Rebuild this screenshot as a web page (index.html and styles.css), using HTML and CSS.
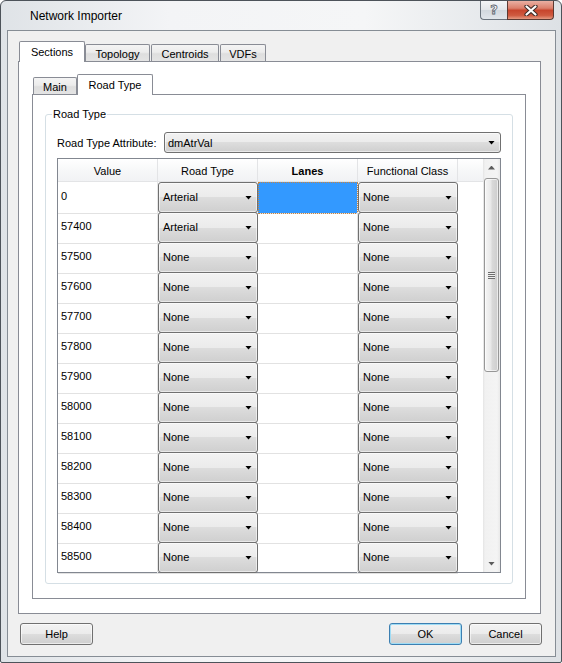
FILE: index.html
```html
<!DOCTYPE html>
<html>
<head>
<meta charset="utf-8">
<title>Network Importer</title>
<link rel="stylesheet" href="styles.css">
</head>
<body>
<div class="window">
  <div class="titlebar">
    <div class="title">Network Importer</div>
    <div class="caption-btns">
      <div class="cap-help"><span>?</span></div>
      <div class="cap-close">
        <svg width="14" height="11" viewBox="0 0 14 11">
          <path d="M2.5 1.5 L11.5 9.5 M11.5 1.5 L2.5 9.5" stroke="#3b2a26" stroke-width="4.2" stroke-linecap="round" fill="none"/>
          <path d="M2.5 1.5 L11.5 9.5 M11.5 1.5 L2.5 9.5" stroke="#ffffff" stroke-width="2.2" stroke-linecap="round" fill="none"/>
        </svg>
      </div>
    </div>
  </div>
  <div class="client">
    <div class="tabctl outer">
      <div class="tabstrip">
        <div class="tab sel w-sections">Sections</div>
        <div class="tab w-topology">Topology</div>
        <div class="tab w-centroids">Centroids</div>
        <div class="tab w-vdfs">VDFs</div>
      </div>
      <div class="tabpanel outer-panel">
        <div class="tabctl inner">
          <div class="tabstrip">
            <div class="tab w-main">Main</div>
            <div class="tab sel w-road">Road Type</div>
          </div>
          <div class="tabpanel inner-panel">
            <div class="groupbox">
              <span class="legend">Road Type</span>
              <div class="attr-row">
                <span class="attr-label">Road Type Attribute:</span>
                <div class="combo attr-combo"><span class="combo-text">dmAtrVal</span><i class="arrow"></i></div>
              </div>
              <div class="grid">
                <div class="table">
                  <div class="hdr">
                    <div class="hcell">Value</div>
                    <div class="hcell">Road Type</div>
                    <div class="hcell bold">Lanes</div>
                    <div class="hcell">Functional Class</div>
                    <div class="hcell filler"></div>
                  </div>
                  <div class="row">
                    <div class="cell val">0</div>
                    <div class="cell cb"><div class="combo"><span class="combo-text">Arterial</span><i class="arrow"></i></div></div>
                    <div class="cell lanes selected"></div>
                    <div class="cell cb"><div class="combo"><span class="combo-text">None</span><i class="arrow"></i></div></div>
                  </div>
                  <div class="row">
                    <div class="cell val">57400</div>
                    <div class="cell cb"><div class="combo"><span class="combo-text">Arterial</span><i class="arrow"></i></div></div>
                    <div class="cell lanes"></div>
                    <div class="cell cb"><div class="combo"><span class="combo-text">None</span><i class="arrow"></i></div></div>
                  </div>
                  <div class="row">
                    <div class="cell val">57500</div>
                    <div class="cell cb"><div class="combo"><span class="combo-text">None</span><i class="arrow"></i></div></div>
                    <div class="cell lanes"></div>
                    <div class="cell cb"><div class="combo"><span class="combo-text">None</span><i class="arrow"></i></div></div>
                  </div>
                  <div class="row">
                    <div class="cell val">57600</div>
                    <div class="cell cb"><div class="combo"><span class="combo-text">None</span><i class="arrow"></i></div></div>
                    <div class="cell lanes"></div>
                    <div class="cell cb"><div class="combo"><span class="combo-text">None</span><i class="arrow"></i></div></div>
                  </div>
                  <div class="row">
                    <div class="cell val">57700</div>
                    <div class="cell cb"><div class="combo"><span class="combo-text">None</span><i class="arrow"></i></div></div>
                    <div class="cell lanes"></div>
                    <div class="cell cb"><div class="combo"><span class="combo-text">None</span><i class="arrow"></i></div></div>
                  </div>
                  <div class="row">
                    <div class="cell val">57800</div>
                    <div class="cell cb"><div class="combo"><span class="combo-text">None</span><i class="arrow"></i></div></div>
                    <div class="cell lanes"></div>
                    <div class="cell cb"><div class="combo"><span class="combo-text">None</span><i class="arrow"></i></div></div>
                  </div>
                  <div class="row">
                    <div class="cell val">57900</div>
                    <div class="cell cb"><div class="combo"><span class="combo-text">None</span><i class="arrow"></i></div></div>
                    <div class="cell lanes"></div>
                    <div class="cell cb"><div class="combo"><span class="combo-text">None</span><i class="arrow"></i></div></div>
                  </div>
                  <div class="row">
                    <div class="cell val">58000</div>
                    <div class="cell cb"><div class="combo"><span class="combo-text">None</span><i class="arrow"></i></div></div>
                    <div class="cell lanes"></div>
                    <div class="cell cb"><div class="combo"><span class="combo-text">None</span><i class="arrow"></i></div></div>
                  </div>
                  <div class="row">
                    <div class="cell val">58100</div>
                    <div class="cell cb"><div class="combo"><span class="combo-text">None</span><i class="arrow"></i></div></div>
                    <div class="cell lanes"></div>
                    <div class="cell cb"><div class="combo"><span class="combo-text">None</span><i class="arrow"></i></div></div>
                  </div>
                  <div class="row">
                    <div class="cell val">58200</div>
                    <div class="cell cb"><div class="combo"><span class="combo-text">None</span><i class="arrow"></i></div></div>
                    <div class="cell lanes"></div>
                    <div class="cell cb"><div class="combo"><span class="combo-text">None</span><i class="arrow"></i></div></div>
                  </div>
                  <div class="row">
                    <div class="cell val">58300</div>
                    <div class="cell cb"><div class="combo"><span class="combo-text">None</span><i class="arrow"></i></div></div>
                    <div class="cell lanes"></div>
                    <div class="cell cb"><div class="combo"><span class="combo-text">None</span><i class="arrow"></i></div></div>
                  </div>
                  <div class="row">
                    <div class="cell val">58400</div>
                    <div class="cell cb"><div class="combo"><span class="combo-text">None</span><i class="arrow"></i></div></div>
                    <div class="cell lanes"></div>
                    <div class="cell cb"><div class="combo"><span class="combo-text">None</span><i class="arrow"></i></div></div>
                  </div>
                  <div class="row">
                    <div class="cell val">58500</div>
                    <div class="cell cb"><div class="combo"><span class="combo-text">None</span><i class="arrow"></i></div></div>
                    <div class="cell lanes"></div>
                    <div class="cell cb"><div class="combo"><span class="combo-text">None</span><i class="arrow"></i></div></div>
                  </div>
                </div>
                <div class="vscroll">
                  <div class="sb-btn"><i class="sb-arrow up"></i></div>
                  <div class="sb-thumb"><i class="grip"></i></div>
                  <div class="sb-track"></div>
                  <div class="sb-btn"><i class="sb-arrow down"></i></div>
                </div>
              </div>
            </div>
          </div>
        </div>
      </div>
    </div>
    <div class="buttons">
      <div class="btn">Help</div>
      <div class="spacer"></div>
      <div class="btn default">OK</div>
      <div class="btn cancel">Cancel</div>
    </div>
  </div>
</div>
</body>
</html>
```

FILE: styles.css
```css
* { box-sizing: border-box; }
html, body { margin: 0; padding: 0; }
body {
  width: 562px;
  height: 663px;
  overflow: hidden;
  background: #ffffff;
  font-family: "Liberation Sans", Arial, sans-serif;
  font-size: 11px;
  color: #000;
}

/* ---------- window frame ---------- */
.window {
  width: 562px;
  height: 663px;
  border: 1px solid #4d535a;
  border-radius: 6px 6px 2px 2px;
  background: linear-gradient(90deg, #dfe3e7 0%, #f3f4f6 30%, #f5f6f7 65%, #dde1e5 100%);
  padding: 0 5px 5px 6px;
  display: flex;
  flex-direction: column;
}
.titlebar {
  height: 29px;
  display: flex;
  align-items: flex-start;
}
.title {
  flex: 1;
  font-size: 12px;
  line-height: 14px;
  margin-top: 8px;
  padding-left: 23px;
  color: #000;
}
.caption-btns {
  display: flex;
  margin-right: 2px;
}
.cap-help {
  width: 27px;
  height: 19px;
  border: 1px solid #6a737d;
  border-top: none;
  border-right: none;
  border-radius: 0 0 0 4px;
  background: linear-gradient(#f3f5f7 0%, #e2e6ea 48%, #d2d8de 52%, #e1e6eb 100%);
  display: flex;
  align-items: center;
  justify-content: center;
}
.cap-help span {
  font-family: "DejaVu Sans", sans-serif;
  font-weight: bold;
  font-size: 13px;
  line-height: 14px;
  color: #ffffff;
  -webkit-text-stroke: 0.8px #59626c;
}
.cap-close {
  width: 47px;
  height: 19px;
  border: 1px solid #5b3a33;
  border-top: none;
  border-radius: 0 0 4px 0;
  background: linear-gradient(#eab0a3 0%, #db7f6b 40%, #c7452d 52%, #cf5a40 80%, #e59a82 100%);
  display: flex;
  align-items: center;
  justify-content: center;
}

/* ---------- client ---------- */
.client {
  flex: 1;
  border: 1px solid #868d95;
  background: #f0f0f0;
  display: flex;
  flex-direction: column;
}

/* ---------- tabs ---------- */
.tabctl {
  flex: 1;
  display: flex;
  flex-direction: column;
}
.tabctl.outer { margin: 10px 14px 0 10px; }
.tabctl.inner { margin: 12px 14px 14px 13px; }
.tabstrip {
  height: 20px;
  display: flex;
  align-items: flex-end;
  padding-left: 1px;
}
.tab {
  height: 17px;
  border: 1px solid #898c95;
  border-bottom: none;
  border-radius: 2px 2px 0 0;
  background: linear-gradient(#f4f4f4 0%, #ececec 45%, #dedede 55%, #e4e4e4 100%);
  text-align: center;
  padding-top: 2px;
  line-height: 14px;
  white-space: nowrap;
}
.tab.sel {
  height: 21px;
  margin-bottom: -1px;
  padding-top: 3px;
  background: #ffffff;
  position: relative;
  z-index: 1;
}
.w-sections { width: 66px; }
.w-topology { width: 65px; }
.w-centroids { width: 68px; margin-left: 1px; }
.w-vdfs { width: 46px; margin-left: 1px; }
.w-main { width: 44px; }
.w-road { width: 76px; }

.tabpanel {
  flex: 1;
  border: 1px solid #898c95;
  background: #ffffff;
  display: flex;
  flex-direction: column;
}

/* ---------- group box ---------- */
.groupbox {
  flex: 1;
  margin: 19px 12px 14px 12px;
  border: 1px solid #d5dfe5;
  border-radius: 3px;
  padding: 17px 11px 10px 11px;
  position: relative;
  display: flex;
  flex-direction: column;
}
.legend {
  position: absolute;
  left: 6px;
  top: -8px;
  line-height: 14px;
  padding: 0 1px;
  background: #ffffff;
}
.attr-row {
  height: 21px;
  display: flex;
  align-items: center;
  margin-bottom: 5px;
}
.attr-label {
  width: 107px;
  white-space: nowrap;
}

/* ---------- combo ---------- */
.combo {
  height: 100%;
  border: 1px solid #707070;
  border-radius: 3px;
  background: linear-gradient(#f2f2f2 0%, #ebebeb 50%, #dddddd 50%, #cfcfcf 100%);
  box-shadow: inset 0 0 0 1px rgba(255, 255, 255, 0.55);
  display: flex;
  align-items: center;
  padding-left: 4px;
  padding-right: 5px;
}
.attr-combo {
  flex: 1;
  height: 21px;
  padding-left: 3px;
  padding-right: 5px;
}
.combo-text { flex: 1; white-space: nowrap; }
.arrow {
  width: 7px;
  height: 4px;
  background: #000;
  clip-path: polygon(0 0, 100% 0, 50% 100%);
}

/* ---------- grid ---------- */
.grid {
  flex: 1;
  border: 1px solid #828790;
  display: flex;
  background: #ffffff;
}
.table {
  flex: 1;
  display: flex;
  flex-direction: column;
}
.hdr {
  height: 23px;
  display: grid;
  grid-template-columns: 100px 100px 100px 100px 25px;
  border-bottom: 1px solid #e3e4e6;
  background: linear-gradient(#ffffff 0%, #f7f8f9 50%, #f1f2f4 100%);
}
.hcell {
  border-right: 1px solid #e3e4e6;
  text-align: center;
  line-height: 22px;
  padding-top: 1px;
  white-space: nowrap;
}
.hcell.filler { border-right: none; }
.hcell.bold { font-weight: bold; }
.row {
  height: 30px;
  display: grid;
  grid-template-columns: 100px 100px 100px 100px 25px;
}
.cell {
  border-bottom: 1px solid #e2e2e2;
  line-height: 29px;
}
.cell.val {
  border-right: 1px solid #e6e6e6;
  padding-left: 3px;
}
.cell.lanes { border-right: 1px solid #e2e2e2; }
.cell.selected {
  background: #3399ff;
  outline: 1px dotted #c9843f;
  outline-offset: -1px;
}

/* ---------- scrollbar ---------- */
.vscroll {
  width: 17px;
  display: flex;
  flex-direction: column;
  background: linear-gradient(90deg, #e4e4e4 0, #f1f1f1 2px, #f4f4f4 14px, #e9e9e9 17px);
}
.sb-btn {
  height: 17px;
  display: flex;
  align-items: center;
  justify-content: center;
}
.sb-arrow {
  width: 7px;
  height: 4px;
  background: #5c5c5c;
}
.sb-arrow.up { clip-path: polygon(50% 0, 100% 100%, 0 100%); }
.sb-arrow.down { clip-path: polygon(0 0, 100% 0, 50% 100%); }
.sb-thumb {
  height: 194px;
  margin: 2px 1px 0 1px;
  border: 1px solid #979797;
  border-radius: 3px;
  background: linear-gradient(90deg, #f6f6f6 0%, #e8e8e8 45%, #d9d9d9 55%, #cdcdcd 100%);
  box-shadow: inset 0 0 0 1px rgba(255, 255, 255, 0.6);
  display: flex;
  align-items: center;
  justify-content: center;
}
.grip {
  width: 7px;
  height: 7px;
  background: repeating-linear-gradient(#6e6e6e 0, #6e6e6e 1px, #eeeeee 1px, #eeeeee 2px);
}
.sb-track { flex: 1; }

/* ---------- buttons ---------- */
.buttons {
  height: 22px;
  margin: 9px 13px 11px 12px;
  display: flex;
}
.spacer { flex: 1; }
.btn {
  width: 73px;
  height: 22px;
  border: 1px solid #707070;
  border-radius: 3px;
  background: linear-gradient(#f2f2f2 0%, #ebebeb 50%, #dddddd 50%, #cfcfcf 100%);
  box-shadow: inset 0 0 0 1px rgba(255, 255, 255, 0.6);
  text-align: center;
  line-height: 20px;
}
.btn.default {
  border-color: #3c7fb1;
  box-shadow: inset 0 0 0 1px #9fdcf5;
}
.btn.cancel { margin-left: 7px; }
```
